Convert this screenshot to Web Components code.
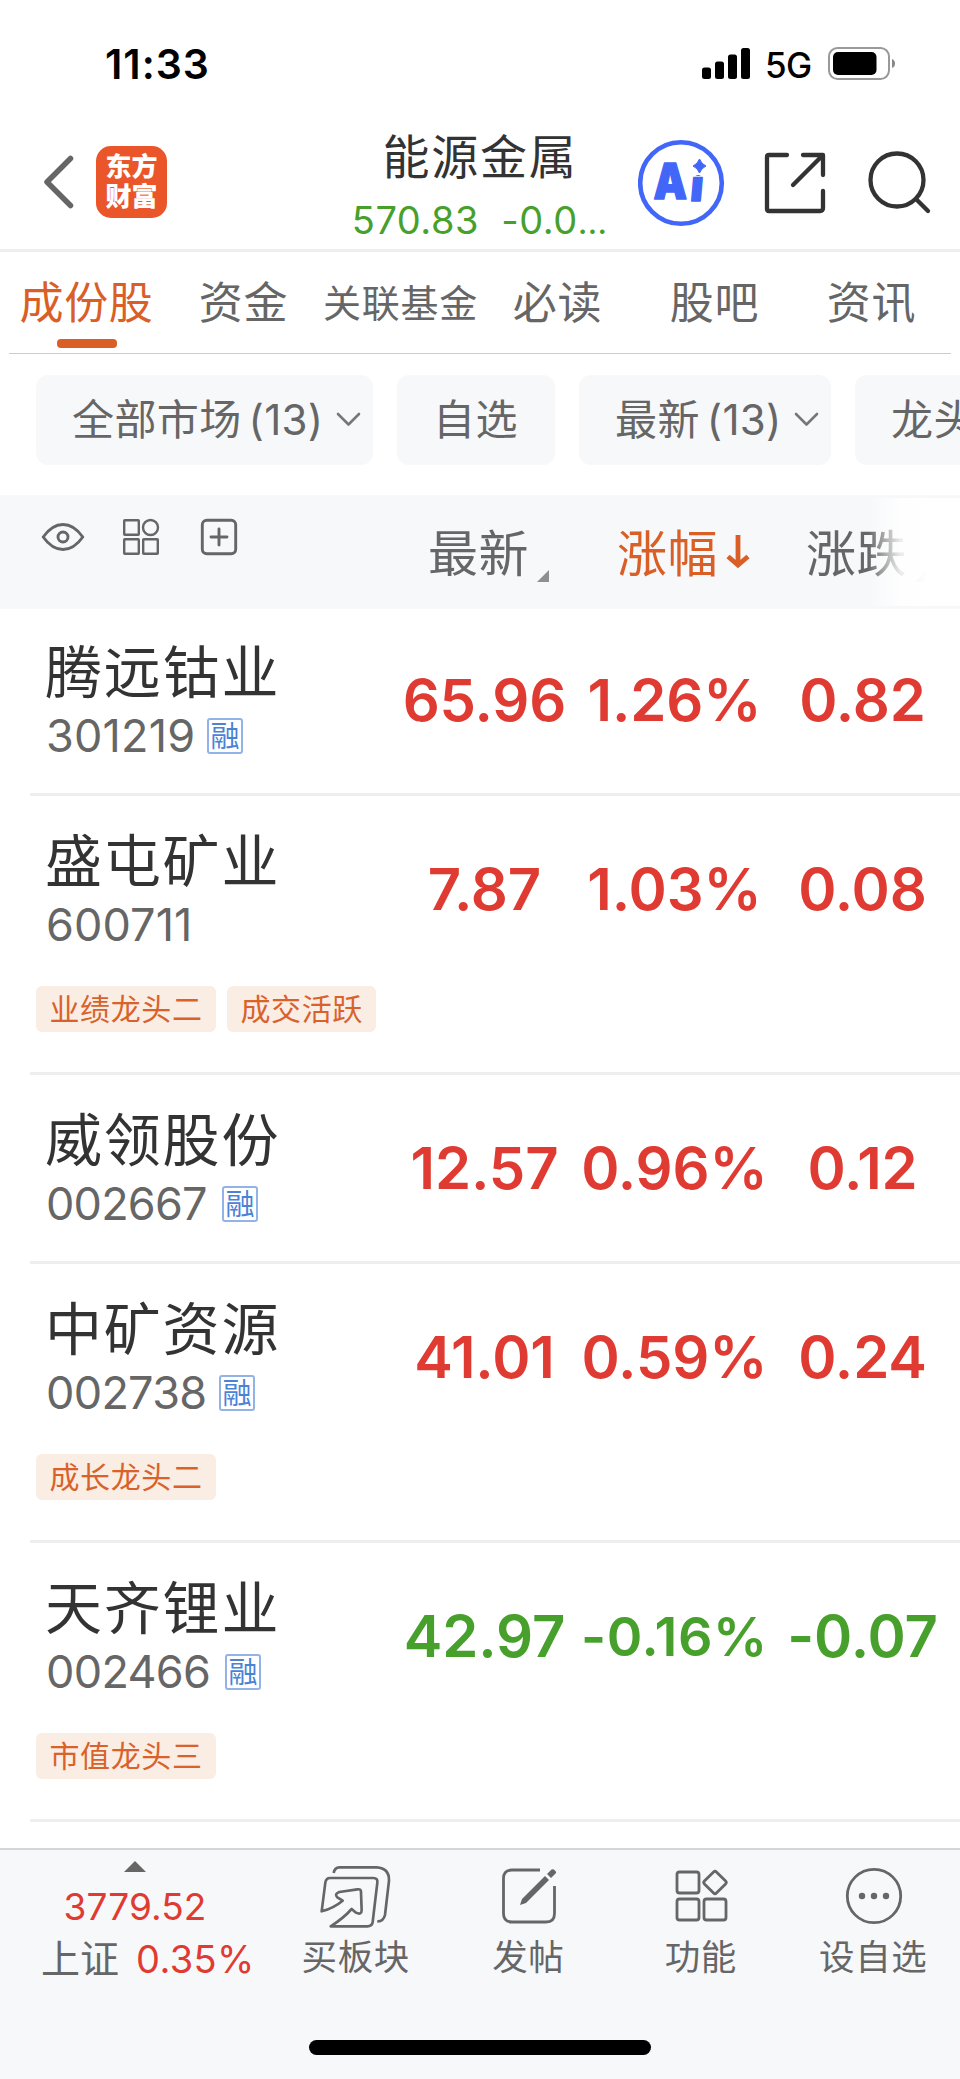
<!DOCTYPE html>
<html lang="zh-CN">
<head>
<meta charset="utf-8">
<title>能源金属</title>
<style>
body{margin:0;background:#fff;font-family:Inter,"Noto Sans CJK SC",sans-serif;color:#666;width:960px;height:2079px;overflow:hidden}
</style>
</head>
<body>
<stock-app></stock-app>
<script>
const define=(name,css,html)=>customElements.define(name,class extends HTMLElement{
  constructor(){
    super();
    const t=document.createElement('template');
    t.innerHTML=`<style>*{box-sizing:border-box}svg{display:block;flex:none}${css}</style>${typeof html==='function'?html(this):html}`;
    this.attachShadow({mode:'open'}).append(t.content.cloneNode(true));
  }
});

define('status-bar',`
:host{display:flex;height:128px;color:#000;line-height:128px;padding-left:105px}
time{font-size:41px;font-weight:600;letter-spacing:1px;width:597px}
span{font-size:35px;font-weight:500;width:63px;margin-left:14px;letter-spacing:-.6px;line-height:130px}
`,`<time>11:33</time>
<svg width="49" height="128" viewBox="702 0 49 128"><rect x="702" y="67.500" width="9" height="11.500" rx="2.500"/><rect x="715" y="61.500" width="9" height="17.500" rx="2.500"/><rect x="728" y="54.500" width="9" height="24.500" rx="2.500"/><rect x="741" y="48" width="9" height="31" rx="2.500"/></svg>
<span>5G</span>
<svg width="70" height="128" viewBox="828 0 70 128"><rect x="829" y="48" width="60" height="31" rx="8.500" fill="none" stroke="#999" stroke-width="2"/><rect x="833" y="52" width="43.500" height="23" rx="5"/><path d="M892 59Q895 60 895 63.500T892 68Z" fill="#888"/></svg>`);

define('brand-logo',`
:host{display:flex;flex-direction:column;justify-content:center;width:71px;height:72px;border-radius:15px;background:#eb552a;color:#fff;text-align:center;font-size:26px;font-weight:900;line-height:30px;padding-bottom:0;box-sizing:border-box}
`,`<div>东方</div><div>财富</div>`);

define('title-bar',`
:host{display:flex;height:124px;border-bottom:3px solid #eee}
.l{display:flex;align-items:center;width:320px;padding:0 0 13px 44px;gap:22px;height:121px}
.m{width:318px;text-align:center;white-space:nowrap}
h1{margin:2px 0 0 0;font-weight:400;font-size:47px;line-height:54px;letter-spacing:1.800px;color:#333;padding-left:2px}
p{margin:11px 0 0 1px;color:#47a02c;font-size:38px;line-height:50px;letter-spacing:.5px;white-space:pre}
i{font-style:normal;font-size:34px;letter-spacing:0}
.r{display:flex}
`,`<div class="l"><svg width="30" height="54" viewBox="0 0 30 54"><path d="M26.500 3.500 3 27l23.500 23.500" fill="none" stroke="#666" stroke-width="5.500" stroke-linecap="round" stroke-linejoin="round"/></svg><brand-logo></brand-logo></div>
<div class="m"><h1>能源金属</h1><p>570.83  -0.0<i>…</i></p></div>
<div class="r"><svg width="322" height="121" viewBox="638 128 322 121" fill="none" stroke="#333" stroke-width="4.300">
<circle cx="681" cy="183" r="40.800" stroke="#4267f8" stroke-width="4.600"/>
<g fill="#4267f8" stroke="#4267f8" stroke-width="1.500" stroke-linejoin="round" font-family="Inter" font-weight="900" font-size="49"><text x="653.500" y="198.500" textLength="33.500" lengthAdjust="spacingAndGlyphs">A</text><text transform="translate(689.500 200.500) skewX(-5)" x="0" y="0" font-size="43">i</text></g>
<rect x="689" y="157" width="20" height="18" fill="#fff" stroke="none"/>
<path d="M699.500 159q2 5 6.500 7-4.500 2-6.500 7-2-5-6.500-7 4.500-2 6.500-7Z" fill="#4267f8" stroke="#4267f8" stroke-width="1"/>
<path d="M787 155H769q-2 0-2 2v52q0 2 2 2h51q3 0 3-3V191M803 155h20v20M822 156l-29 29" stroke-linecap="round" stroke-linejoin="round"/>
<circle cx="897" cy="180" r="26.500"/><path d="m916 199 12 12" stroke-linecap="round"/></svg></div>`);

define('tab-item',`
:host{display:block;position:relative;width:157px;text-align:center;font-size:44px;line-height:103px;height:101px;font-weight:400;letter-spacing:.7px;white-space:nowrap;color:#666}
:host([small]){font-size:38px;letter-spacing:.8px}
:host([active]){color:#d95f27}
:host([active])::after{content:"";position:absolute;left:49px;top:87px;width:60px;height:9px;border-radius:4px;background:#d95f27}
`,`<slot></slot>`);

define('tab-strip',`
:host{display:flex;height:102px;margin:0 9px;border-bottom:1px solid #ccc}
.in{display:flex;margin-left:-1px}
`,`<div class="in"><slot></slot></div>`);

define('filter-chip',`
:host{display:flex;flex:none;align-items:center;height:90px;border-radius:12px;background:#f7f8fa;padding:0 36px;font-size:42px;line-height:92px;font-weight:400;letter-spacing:.4px;white-space:pre}
:host([menu]){padding-right:12px}
b{font-weight:400;margin-left:7px;letter-spacing:.3px}
svg{margin-left:auto}
`,h=>`<slot></slot>${h.hasAttribute('menu')?'<b>(13)</b><svg width="25" height="16" viewBox="0 0 25 16"><path d="m2 2 10.500 10.500L23 2" fill="none" stroke="#777" stroke-width="2.600" stroke-linecap="round" stroke-linejoin="round"/></svg>':''}`);

define('filter-row',`
:host{display:flex;gap:24px;height:141px;padding:21px 0 0 36px;overflow:hidden;box-sizing:border-box}
`,`<slot></slot>`);

define('table-head',`
:host{display:flex;position:relative;height:114px;background:#f7f8fa;font-size:50px;font-weight:400;line-height:119px;letter-spacing:.5px;overflow:hidden}
.t{width:428px;flex:none}.c{display:flex;width:189px;flex:none}.u{color:#d95f27}
.fade{position:absolute;top:3px;bottom:3px;right:0;width:92px;background:linear-gradient(90deg,#fff0,#fffd 32px,#ffff 60px)}
`,`<div class="t"><svg width="260" height="114" viewBox="0 495 260 114" fill="none" stroke="#666" stroke-width="2.900" stroke-linejoin="round">
<path d="M43.200 537Q52 524.500 63 524.500T82.800 537Q74 549.500 63 549.500T43.200 537Z"/><circle cx="63" cy="537" r="5"/>
<g stroke-width="2.400"><rect x="124.200" y="520.200" width="14.600" height="14.600" rx=".6"/><circle cx="150.500" cy="527.500" r="7.500"/><rect x="124.200" y="539.200" width="14.600" height="14.600" rx=".6"/><rect x="143.200" y="539.200" width="14.600" height="14.600" rx=".6"/></g>
<rect x="202.300" y="520.300" width="33.400" height="33.400" rx="4.500"/><path d="M219 529v16M211 537h16" stroke-linecap="round"/></svg></div>
<div class="c">最新<svg width="24" height="114" viewBox="0 0 24 114"><path d="M20 75v12H8Z" fill="#8e8e93"/></svg></div>
<div class="c u">涨幅<svg width="34" height="114" viewBox="0 0 34 114"><path d="M20 40V70M10 61.500l10 8.500 10-8.500" fill="none" stroke="#d95f27" stroke-width="4.800"/></svg></div>
<div class="c">涨跌<svg width="24" height="114" viewBox="0 0 24 114"><path d="M20 75v12H8Z" fill="#8e8e93"/></svg></div>
<div class="fade"></div>`);

define('tag-chip',`
:host{display:block;height:46px;border-radius:6px;background:#f9ede4;color:#d9622b;font-size:30px;line-height:46px;font-weight:400;letter-spacing:.6px;padding:0 13.500px;white-space:nowrap}
`,`<slot></slot>`);

define('stock-row',`
:host{display:block}
.g{display:grid;grid-template-columns:390px repeat(3,189px);height:147px}
.n{padding:37px 0 0 45px;font-size:57px;line-height:57px;font-weight:400;letter-spacing:1.800px;color:#333;white-space:nowrap}
.c{display:flex;align-items:center;height:36px;margin-top:17px;padding-left:1px;font-size:45px;font-weight:400;line-height:36px;letter-spacing:var(--ls,0);color:#666}
.c span:first-child{width:var(--w)}
.b{width:36px;height:36px;border:2px solid #93b3e8;border-radius:3px;color:#4a82d6;font-size:29px;line-height:33px;text-align:center;letter-spacing:0}
.v{height:185px;line-height:187px;font-size:58px;font-weight:600;text-align:center;color:#e03b33;white-space:nowrap;letter-spacing:-.1px}
.p{padding-left:2px}
:host([down]) .v{color:#47a02c}
:host([down]) .v.p{font-size:54px;letter-spacing:.6px}
.tags{display:flex;gap:11px;margin:43px 0 40px 36px}
.e{height:39px}
.line{height:3px;background:#eee;margin-left:30px}
`,h=>{const a=k=>h.getAttribute(k);return `<div class="g"><div class="n">${a('name')}<div class="c"><span>${a('code')}</span>${h.hasAttribute('margin')?'<span class="b">融</span>':''}</div></div>
<div class="v">${a('price')}</div><div class="v p">${a('pct')}</div><div class="v">${a('chg')}</div></div>
${a('tags')?`<div class="tags">${a('tags').split(',').map(t=>`<tag-chip>${t}</tag-chip>`).join('')}</div>`:'<div class="e"></div>'}<div class="line"></div>`});

define('nav-button',`
:host{display:flex;flex-direction:column;align-items:center;width:172.500px;font-size:35.500px;font-weight:400;line-height:48px;letter-spacing:.6px}
::slotted(svg){display:block;height:84px;fill:none;stroke:#666;stroke-width:2.800;stroke-linejoin:round}
span{margin-right:1px}
`,`<slot name="icon"></slot><span><slot></slot></span>`);

define('index-ticker',`
:host{display:flex;flex-direction:column;width:270px;color:#666}
svg{margin:11px 0 0 124px}
.a{color:#e03b33;font-size:37px;line-height:44px;letter-spacing:.1px;text-align:center;margin-top:13px}
.b{display:flex;margin-left:41px;font-size:39px;font-weight:400;line-height:48px;margin-top:6px}
.b b{color:#e03b33;font-weight:400;font-size:38px;margin:0 0 0 17px;letter-spacing:.4px}
`,`<svg width="22" height="11" viewBox="0 0 22 11"><path d="M0 11 11 0l11 11Z" fill="#666"/></svg><div class="a">3779.52</div><div class="b">上证<b>0.35%</b></div>`);

define('bottom-nav',`
:host{display:block;position:absolute;left:0;bottom:0;width:960px;height:231px;background:#f7f8fa;border-top:2px solid #d4d5db;box-sizing:border-box}
.r{display:flex;height:190px}
.home{width:342px;height:15px;border-radius:8px;background:#000;margin:0 auto}
`,`<div class="r"><index-ticker></index-ticker>
<nav-button><svg slot="icon" width="76" height="84" viewBox="954 30 228 252" style="stroke-width:8"><path d="M1001 99Q1004 82 1018 82H1130Q1168 84 1167 122L1155 225Q1150 245 1132 244M965 214 976 128Q978 114 990 114H1120Q1134 114 1132 128L1118 246Q1116 259 1102 259H992Q1030 235 1055 207L1068 218Q1085 226 1085 210L1083 158Q1084 146 1072 148L1018 156Q1002 162 1012 172L1028 182Q1000 205 965 214Z"/></svg>买板块</nav-button>
<nav-button><svg slot="icon" width="60" height="84" viewBox="499 1850 60 84"><path d="M540 1870H512q-8.500 0-8.500 8.500v35q0 8.500 8.500 8.500h34q8.500 0 8.500-8.500V1886"/><path d="M520 1905 522 1899 545 1876 549 1880 526 1903ZM547 1874 551.500 1869.500Q553 1868.500 555 1870.500T555.500 1873.500L551 1878Z" fill="#666" stroke="none"/></svg>发帖</nav-button>
<nav-button><svg slot="icon" width="60" height="84" viewBox="671 1850 60 84"><rect x="677" y="1872" width="22" height="21" rx="2.500"/><rect x="677" y="1899" width="22" height="21" rx="2.500"/><rect x="704" y="1899" width="22" height="21" rx="2.500"/><rect x="706.500" y="1874" width="17" height="17" rx="2" transform="rotate(45 715 1882.500)"/></svg>功能</nav-button>
<nav-button><svg slot="icon" width="60" height="84" viewBox="844 1850 60 84"><circle cx="874" cy="1896" r="26.700"/><g fill="#666" stroke="none"><circle cx="862" cy="1896" r="3.200"/><circle cx="874" cy="1896" r="3.200"/><circle cx="886" cy="1896" r="3.200"/></g></svg>设自选</nav-button></div>
<div class="home"></div>`);

define('stock-app',`
:host{display:block;position:relative;width:960px;height:2079px;overflow:hidden;background:#fff}
.list{margin-top:-2px}
`,`<status-bar></status-bar><title-bar></title-bar>
<tab-strip><tab-item active>成份股</tab-item><tab-item>资金</tab-item><tab-item small>关联基金</tab-item><tab-item>必读</tab-item><tab-item>股吧</tab-item><tab-item>资讯</tab-item></tab-strip>
<filter-row><filter-chip menu style="width:337px;box-sizing:border-box">全部市场</filter-chip><filter-chip style="width:158px;box-sizing:border-box">自选</filter-chip><filter-chip menu style="width:252px;box-sizing:border-box">最新</filter-chip><filter-chip>龙头</filter-chip></filter-row>
<table-head></table-head>
<div class="list" id="list"></div><bottom-nav></bottom-nav>`);

/* name, code, width up to the margin badge, code tracking, price, change %, change, tags, falling */
const rows=[
 ['腾远钴业','301219',161,.2,'65.96','1.26%','0.82',''],
 ['盛屯矿业','600711',0,.1,'7.87','1.03%','0.08','业绩龙头二,成交活跃'],
 ['威领股份','002667',176,-.8,'12.57','0.96%','0.12',''],
 ['中矿资源','002738',173,-.7,'41.01','0.59%','0.24','成长龙头二'],
 ['天齐锂业','002466',179,-.7,'42.97','-0.16%','-0.07','市值龙头三',1]];
document.querySelector('stock-app').shadowRoot.getElementById('list').innerHTML=rows.map(([n,c,w,ls,p,q,d,t,dn])=>
 `<stock-row name="${n}" code="${c}" ${w?'margin':''} price="${p}" pct="${q}" chg="${d}" tags="${t}" ${dn?'down':''} style="--w:${w||170}px;--ls:${ls}px"></stock-row>`).join('');
</script>
</body>
</html>
